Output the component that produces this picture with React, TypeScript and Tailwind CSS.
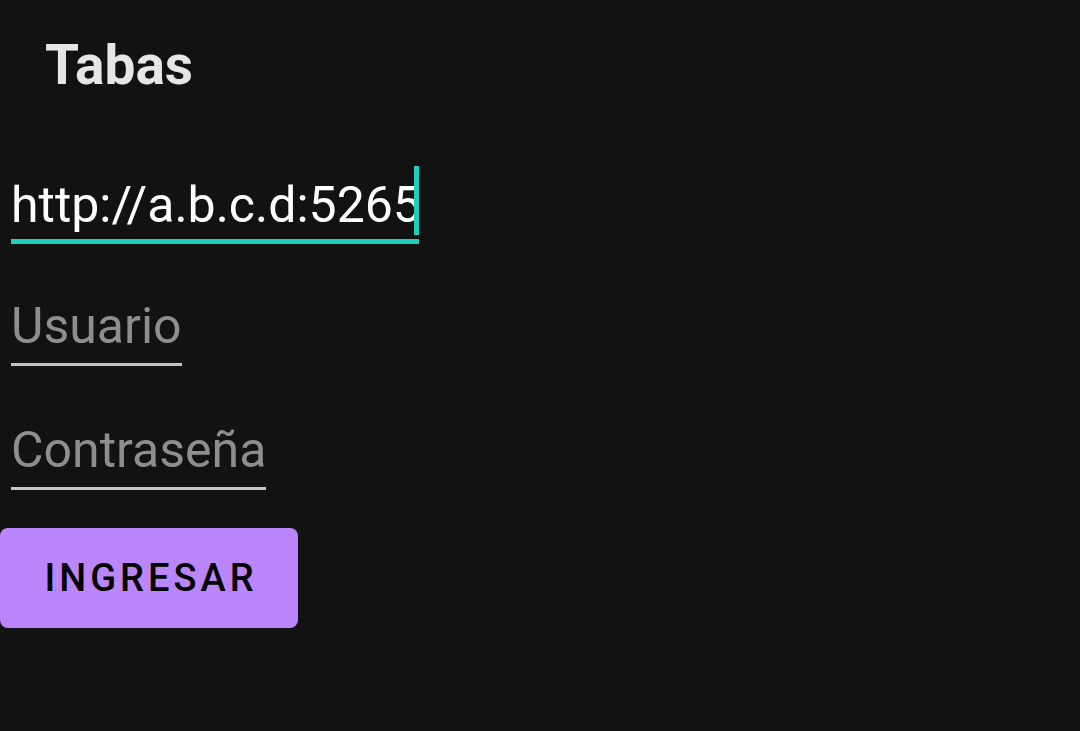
const App = () => {
  return (
    <div className="min-h-[731px] w-full bg-[#121212] font-['Roboto',sans-serif]">
      <div className="flex flex-col items-start">
        <h1 className="pl-[45px] pt-[33px] text-[55px] font-bold leading-[64px] text-[#e6e6e6]">Tabas</h1>

        <div className="mt-[69px] ml-[11px] flex flex-col">
          <div className="flex items-end">
            <span className="text-[50px] leading-[60px] text-white">http://a.b.c.d:5265</span>
            <span className="ml-[-7px] h-[69px] w-[5px] bg-[#1ccfbf]"></span>
          </div>
          <div className="mt-[4px] h-[5px] w-full bg-[#1ccfbf]"></div>
        </div>

        <div className="mt-[52px] ml-[11px] flex flex-col">
          <span className="text-[50px] leading-[60px] text-[#8e8e8e]">Usuario</span>
          <div className="mt-[7px] h-[3px] w-full bg-[#c4c4c4]"></div>
        </div>

        <div className="mt-[54px] ml-[11px] flex flex-col">
          <span className="text-[50px] leading-[60px] text-[#8e8e8e]">Contraseña</span>
          <div className="mt-[7px] h-[3px] w-full bg-[#c4c4c4]"></div>
        </div>

        <button
          type="button"
          className="mt-[38px] flex h-[100px] w-[298px] items-center justify-center rounded-[8px] bg-[#bb86fc] pl-[4px] text-[38px] font-medium tracking-[4px] text-black"
        >
          INGRESAR
        </button>
      </div>
    </div>
  );
};

export default App;
